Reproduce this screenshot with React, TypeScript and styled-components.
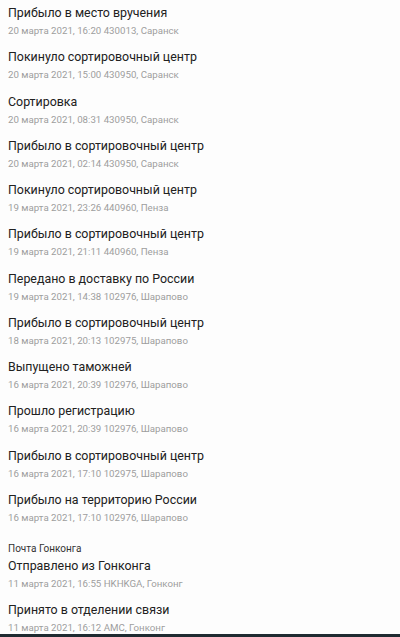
import React from "react";
import styled, { createGlobalStyle } from "styled-components";

const Global = createGlobalStyle`
  html, body { margin: 0; padding: 0; background: #fdfdfd; }
  body { font-family: Roboto, "Noto Sans", Arial, sans-serif; }
`;

const Page = styled.div`
  padding: 3px 8px 0 8px;
  display: flex;
  flex-direction: column;
`;

const Item = styled.div`
  display: flex;
  flex-direction: column;
  padding-bottom: 8.27px;
`;

const Title = styled.div`
  font-size: 12.4px;
  line-height: 20px;
  color: #212121;
`;

const Sub = styled.div`
  font-size: 9.7px;
  line-height: 16px;
  color: #9e9e9e;
`;

const Section = styled.div`
  font-size: 10px;
  line-height: 14px;
  color: #333;
  margin-top: 8px;
`;

const BottomBar = styled.div`
  position: fixed;
  left: 0;
  right: 0;
  bottom: 0;
  height: 3px;
  background: #1f2b31;
`;

type Ev = { t: string; s: string };

const russia: Ev[] = [
  { t: "Прибыло в место вручения", s: "20 марта 2021, 16:20 430013, Саранск" },
  { t: "Покинуло сортировочный центр", s: "20 марта 2021, 15:00 430950, Саранск" },
  { t: "Сортировка", s: "20 марта 2021, 08:31 430950, Саранск" },
  { t: "Прибыло в сортировочный центр", s: "20 марта 2021, 02:14 430950, Саранск" },
  { t: "Покинуло сортировочный центр", s: "19 марта 2021, 23:26 440960, Пенза" },
  { t: "Прибыло в сортировочный центр", s: "19 марта 2021, 21:11 440960, Пенза" },
  { t: "Передано в доставку по России", s: "19 марта 2021, 14:38 102976, Шарапово" },
  { t: "Прибыло в сортировочный центр", s: "18 марта 2021, 20:13 102975, Шарапово" },
  { t: "Выпущено таможней", s: "16 марта 2021, 20:39 102976, Шарапово" },
  { t: "Прошло регистрацию", s: "16 марта 2021, 20:39 102976, Шарапово" },
  { t: "Прибыло в сортировочный центр", s: "16 марта 2021, 17:10 102975, Шарапово" },
  { t: "Прибыло на территорию России", s: "16 марта 2021, 17:10 102976, Шарапово" },
];

const hk: Ev[] = [
  { t: "Отправлено из Гонконга", s: "11 марта 2021, 16:55 HKHKGA, Гонконг" },
  { t: "Принято в отделении связи", s: "11 марта 2021, 16:12 AMC, Гонконг" },
];

export default function App() {
  return (
    <>
      <Global />
      <Page>
        {russia.map((e, i) => (
          <Item key={i}>
            <Title>{e.t}</Title>
            <Sub>{e.s}</Sub>
          </Item>
        ))}
        <Section>Почта Гонконга</Section>
        {hk.map((e, i) => (
          <Item key={"h" + i}>
            <Title>{e.t}</Title>
            <Sub>{e.s}</Sub>
          </Item>
        ))}
      </Page>
      <BottomBar />
    </>
  );
}
